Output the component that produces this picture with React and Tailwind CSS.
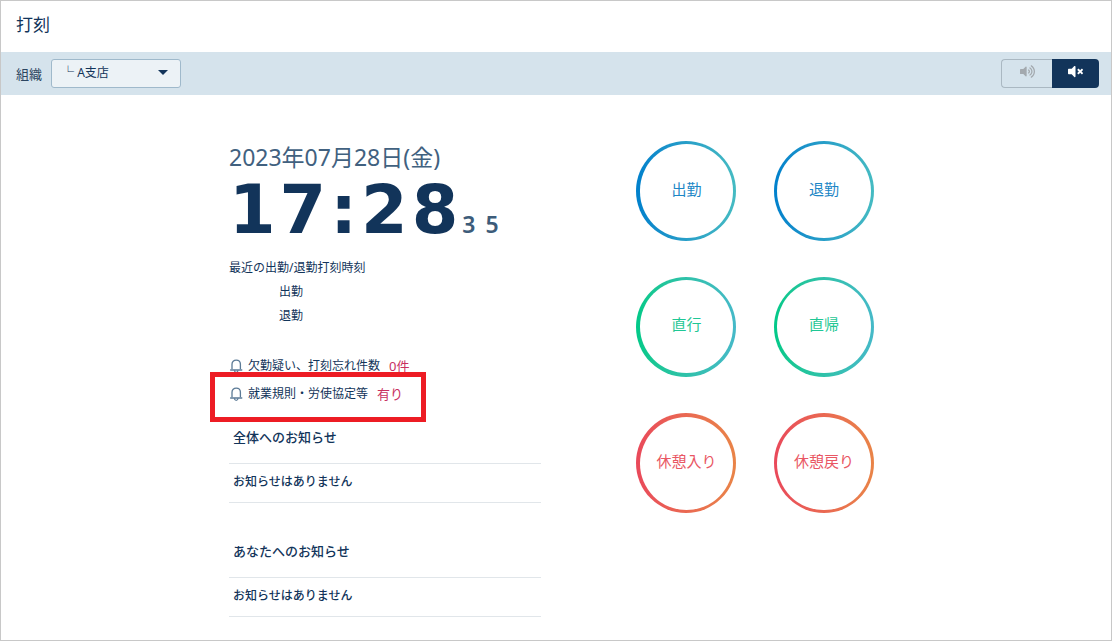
import React from "react";
import { FaVolumeUp, FaVolumeMute } from "react-icons/fa";

function BellIcon() {
  return (
    <svg
      viewBox="0 0 14 16"
      className="h-4 w-3.5 shrink-0 text-[#5b7a96]"
      fill="none"
      stroke="currentColor"
      strokeWidth="1.3"
      aria-hidden="true"
    >
      <path d="M3 11.300V6.200C3 3.800 4.800 2.100 7.200 2.100s4.200 1.700 4.200 4.100v5.100" />
      <path d="M1.600 12h11.200" strokeLinecap="round" />
      <path d="M5.400 12.300c.1 1.400.9 2.100 1.800 2.100s1.700-.7 1.800-2.100" />
    </svg>
  );
}

const punches = [
  { label: "出勤", ring: "from-[#0080cc] to-[#45bbc2] pl-1", text: "text-[#1c86c6]" },
  { label: "退勤", ring: "from-[#0080cc] to-[#45bbc2]", text: "text-[#1c86c6]" },
  { label: "直行", ring: "from-[#00c988] to-[#45b9c8] pl-1 pb-1", text: "text-[#1fc795]" },
  { label: "直帰", ring: "from-[#00c988] to-[#45b9c8] pb-1", text: "text-[#1fc795]" },
  { label: "休憩入り", ring: "from-[#e9485a] to-[#e98447] pl-1 pt-1", text: "text-[#e95764]" },
  { label: "休憩戻り", ring: "from-[#e9485a] to-[#e98447] pt-1", text: "text-[#e95764]" },
];

function PunchButton({ label, ring, text }) {
  return (
    <button type="button" className={`size-[100px] rounded-full bg-linear-to-r p-[3px] ${ring}`}>
      <span className={`flex size-full items-center justify-center rounded-full bg-white pb-1 text-[15px] ${text}`}>
        {label}
      </span>
    </button>
  );
}

function Notice({ title }) {
  return (
    <section>
      <h2 className="border-b border-[#e1e6ea] px-1 pb-4 text-[13px] leading-5 font-medium">{title}</h2>
      <p className="border-b border-[#e1e6ea] px-1 pt-2 pb-2.5 text-xs leading-5 font-medium">
        お知らせはありません
      </p>
    </section>
  );
}

export default function App() {
  return (
    <div className="min-h-screen border border-[#c8c8c8] bg-white font-['Noto_Sans','Noto_Sans_CJK_JP',sans-serif] text-[#12345a]">
      <header className="px-[15px] pt-3 pb-4">
        <h1 className="text-[17px] leading-[23px]">打刻</h1>
      </header>

      <div className="flex items-center justify-between bg-[#d5e3ec] py-1.5 pr-3 pl-[15px]">
        <div className="flex items-center gap-[9px]">
          <label htmlFor="org" className="text-[13px] leading-5 text-[#2b4560]">
            組織
          </label>
          <div className="relative">
            <select
              id="org"
              className="block h-[29px] w-[130px] appearance-none rounded-[3px] border border-[#9fb9cb] bg-[#ecf2f6] pb-0.5 pl-2.5 text-xs"
            >
              <option>└ A支店</option>
            </select>
            <svg
              viewBox="0 0 10 5"
              className="pointer-events-none absolute top-[11px] right-[13px] h-[5px] w-2.5"
              aria-hidden="true"
            >
              <path d="M0 0h10L5 5z" fill="#12345a" />
            </svg>
          </div>
        </div>
        <div className="flex h-[31px] py-px">
          <button
            type="button"
            aria-label="音声オン"
            className="flex w-[51px] items-center justify-center rounded-l-[4px] border border-r-0 border-[#aab8c2] pb-1 text-[#a3a9ae]"
          >
            <FaVolumeUp size={15} />
          </button>
          <button
            type="button"
            aria-label="音声オフ"
            aria-pressed="true"
            className="flex w-[47px] items-center justify-center rounded-r-[4px] bg-[#12345a] pb-1 text-white"
          >
            <FaVolumeMute size={15} />
          </button>
        </div>
      </div>

      <main className="mx-auto flex max-w-[654px] gap-[95px] pt-[46px] pb-4">
        <div className="w-[312px]">
          <p className="text-[23px] leading-8 text-[#41617f]">2023年07月28日(金)</p>
          <p className="flex items-baseline pt-[5px] font-['DejaVu_Sans',sans-serif] leading-[64px] font-bold">
            <span className="text-[67px] tracking-[4px]">17:28</span>
            <span className="font-['Noto_Sans'] text-[23px] font-semibold tracking-[10px] text-[#3d5c7a]">35</span>
          </p>

          <div className="text-xs leading-6">
            <p>最近の出勤/退勤打刻時刻</p>
            <p className="pl-[50px]">出勤</p>
            <p className="pl-[50px]">退勤</p>
          </div>

          <ul className="pt-6 text-xs leading-7">
            <li className="flex items-center gap-[5px]">
              <BellIcon />
              <span>欠勤疑い、打刻忘れ件数</span>
              <a href="#missing" className="pl-1 text-[13px] text-[#c8305f]">
                0件
              </a>
            </li>
            <li className="relative flex items-center gap-[5px]">
              <BellIcon />
              <span>就業規則・労使協定等</span>
              <a href="#rules" className="pl-1 text-[13px] text-[#c8305f]">
                有り
              </a>
              <div className="pointer-events-none absolute -top-2 -left-[19px] h-[50px] w-[216px] border-5 border-[#ed1c24]" />
            </li>
          </ul>

          <div className="flex flex-col gap-[38px] pt-[19px]">
            <Notice title="全体へのお知らせ" />
            <Notice title="あなたへのお知らせ" />
          </div>
        </div>

        <div className="grid grid-cols-2 content-start gap-x-[38px] gap-y-9">
          {punches.map((p) => (
            <PunchButton key={p.label} {...p} />
          ))}
        </div>
      </main>
    </div>
  );
}
